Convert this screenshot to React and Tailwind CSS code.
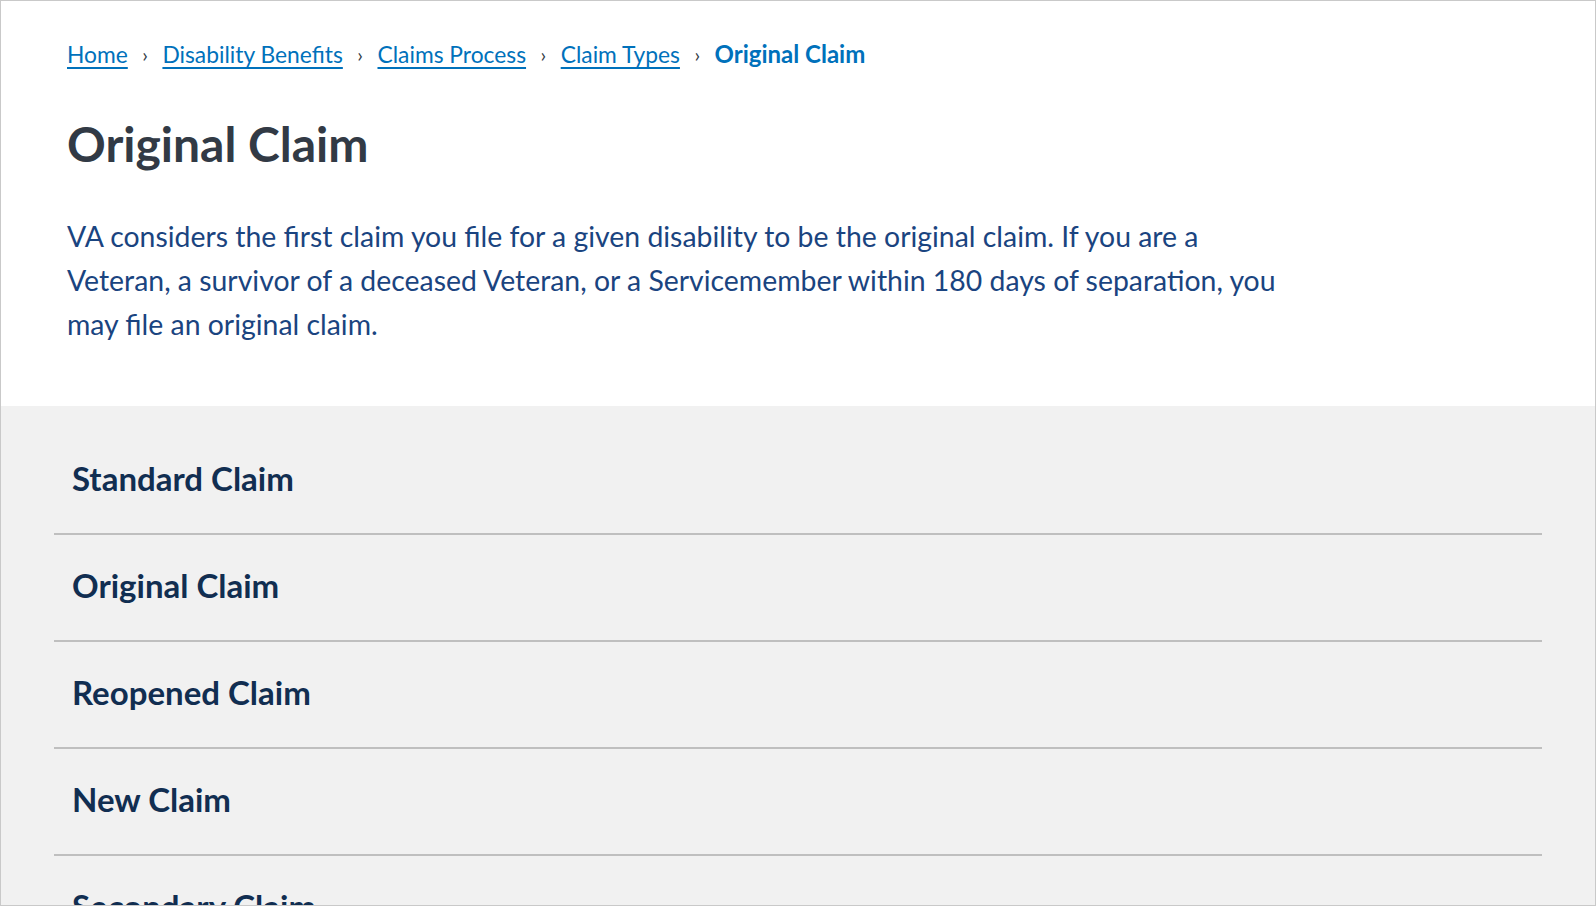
const crumbs = ["Home", "Disability Benefits", "Claims Process", "Claim Types"];

const claimTypes = [
  "Standard Claim",
  "Original Claim",
  "Reopened Claim",
  "New Claim",
  "Secondary Claim",
];

function Breadcrumbs() {
  return (
    <nav className="flex items-center text-[22.8px] leading-[32px]">
      {crumbs.map((c) => (
        <span key={c} className="flex items-center">
          <a href="#" className="text-[#0071bb] underline underline-offset-[4px] decoration-[1.5px]">
            {c}
          </a>
          <span className="mx-[14.5px] text-[#323a45] text-[20px]">›</span>
        </span>
      ))}
      <span className="font-bold text-[24px] text-[#0071bb]">Original Claim</span>
    </nav>
  );
}

export default function App() {
  return (
    <div
      className="h-screen w-full overflow-hidden border border-[#c9c9c9] bg-white flex flex-col"
      style={{ fontFamily: "Lato, 'Open Sans', sans-serif" }}
    >
      <section className="px-[66px] pt-[37px] pb-[60px]">
        <Breadcrumbs />
        <h1 className="mt-[46px] text-[48px] leading-[56px] font-bold text-[#323a45]">
          Original Claim
        </h1>
        <p className="mt-[42px] max-w-[1225px] text-[28.4px] leading-[44px] text-[#1a4480]">
          VA considers the first claim you file for a given disability to be the original
          claim. If you are a Veteran, a survivor of a deceased Veteran, or a Servicemember
          within 180 days of separation, you may file an original claim.
        </p>
      </section>

      <section className="flex-1 bg-[#f1f1f1] px-[53px] pt-[22px]">
        <ul>
          {claimTypes.map((t) => (
            <li key={t} className="border-b-2 border-[#bfbfbf] pl-[18px] pt-[30px] pb-[35px]">
              <h3 className="text-[33px] leading-[40px] font-bold text-[#112e51]">{t}</h3>
            </li>
          ))}
        </ul>
      </section>
    </div>
  );
}
